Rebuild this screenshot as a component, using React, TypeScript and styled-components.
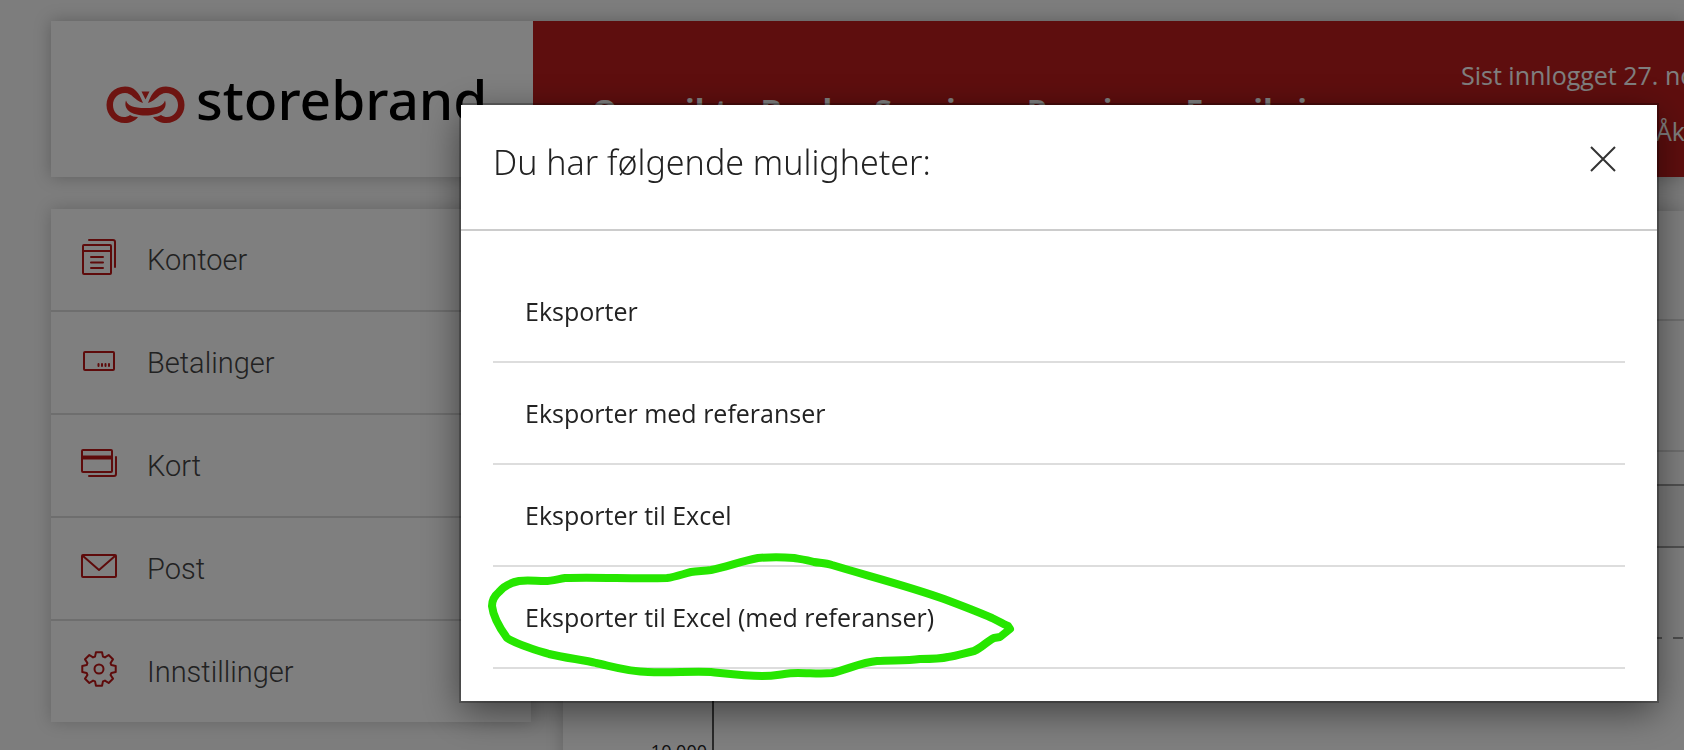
import React from "react";
import styled, { createGlobalStyle } from "styled-components";

const Global = createGlobalStyle`
  * { box-sizing: border-box; }
  html, body, #root { height: 100%; }
  body { margin: 0; background: #fafafa; color: #333; font-family: "Open Sans", "Noto Sans", sans-serif; overflow: hidden; }
  ul { list-style: none; margin: 0; padding: 0; }
  a { color: inherit; text-decoration: none; }
`;

const Page = styled.div`
  height: 100%;
  padding: 21px 0 0 51px;
  overflow: hidden;
`;

const Header = styled.header`
  display: flex;
  height: 156px;
  margin-bottom: 32px;
  box-shadow: 0 0 16px rgba(0, 0, 0, 0.25);
`;

const Brand = styled.a`
  flex: none;
  display: flex;
  align-items: center;
  width: 482px;
  padding: 12px 0 0 55px;
  background: #fff;
`;

const Banner = styled.div`
  flex: 1;
  min-width: 0;
  display: flex;
  justify-content: space-between;
  padding-left: 59px;
  background: #bd1c1c;
  color: #fff;
`;

const Nav = styled.nav`
  display: flex;
  gap: 32px;
  padding-top: 70px;
  font-size: 32px;
  line-height: 40px;
  font-weight: 700;
  white-space: nowrap;
`;

const Account = styled.div`
  flex: none;
  display: flex;
  flex-direction: column;
  gap: 20px;
  width: 223px;
  padding-top: 36px;
  overflow: hidden;
  font-size: 25px;
  line-height: 36px;
  white-space: nowrap;
`;

const UserName = styled.span`
  padding-left: 195px;
`;

const Columns = styled.div`
  display: flex;
  align-items: flex-start;
  gap: 32px;
`;

const Sidebar = styled.nav`
  flex: none;
  width: 480px;
  background: #fff;
  box-shadow: 0 0 16px rgba(0, 0, 0, 0.2);
`;

const SideItem = styled.li`
  & + & { border-top: 2px solid #dcdcdc; }
`;

const SideLink = styled.a`
  display: flex;
  align-items: center;
  gap: 28px;
  height: 101px;
  padding-left: 28px;
  font-family: Roboto, sans-serif;
  font-weight: 300;
  font-size: 29px;
  line-height: 40px;
  color: #444;

  svg { flex: none; margin-bottom: 5px; }
`;

const Content = styled.main`
  flex: 1;
  min-width: 0;
  height: 600px;
  margin-top: 2px;
  background: #fff;
  box-shadow: 0 0 16px rgba(0, 0, 0, 0.2);
`;

const Band = styled.div<{ $height: number; $line: string; $fill?: string }>`
  height: ${(p) => p.$height}px;
  border-bottom: 2px solid ${(p) => p.$line};
  background: ${(p) => p.$fill ?? "transparent"};
`;

const Chart = styled.div`
  display: flex;
  height: 220px;
`;

const AxisLabels = styled.div`
  width: 151px;
  padding: 189px 5px 0 0;
  border-right: 2px solid #555;
  text-align: right;
  font-size: 18px;
  line-height: 28px;
  color: #222;
`;

const Plot = styled.div`
  flex: 1;
  padding-top: 89px;
`;

const GridLine = styled.div`
  height: 2px;
  background: repeating-linear-gradient(to left, transparent 0 1px, #999 1px 11px, transparent 11px 21px);
`;

const Overlay = styled.div`
  position: fixed;
  inset: 0;
  padding: 105px 27px 0 461px;
  background: rgba(0, 0, 0, 0.5);
`;

const Dialog = styled.section`
  background: #fff;
  box-shadow: 0 0 0 2px rgba(0, 0, 0, 0.25), 0 10px 36px rgba(0, 0, 0, 0.5);
`;

const DialogHeader = styled.div`
  display: flex;
  justify-content: space-between;
  align-items: flex-start;
  height: 126px;
  padding: 32px 38px 0 32px;
  border-bottom: 2px solid #ccc;
`;

const Title = styled.h2`
  margin: 0;
  font-family: "Noto Sans", "Open Sans", sans-serif;
  font-weight: 300;
  font-size: 34px;
  line-height: 50px;
  color: #222;
`;

const CloseButton = styled.button`
  display: flex;
  padding: 6px 0;
  border: 0;
  background: none;
  cursor: pointer;
`;

const Options = styled.ul`
  && { padding: 30px 32px 32px; }
`;

const Option = styled.li`
  position: relative;
  border-bottom: 2px solid #ddd;
`;

const OptionLink = styled.a`
  display: block;
  padding: 32px;
  font-size: 25px;
  line-height: 36px;
  color: #222;
`;

const Marker = styled.svg`
  position: absolute;
  left: -8px;
  top: -20px;
  pointer-events: none;
`;

const icon = { fill: "none", stroke: "#bd1616", strokeWidth: 2, strokeLinejoin: "round", strokeLinecap: "round" } as const;

const AccountsIcon = () => (
  <svg width="40" height="40" viewBox="0 0 40 40" {...icon}>
    <rect x="4" y="8" width="28" height="29" rx="1" />
    <path d="M4 14H32M12 20H24M12 25.500H24M12 31H24M10 3H34Q36 3 36 5V30" />
  </svg>
);

const PaymentsIcon = () => (
  <svg width="40" height="40" viewBox="0 0 40 40" {...icon}>
    <rect x="5" y="12" width="30" height="18" rx="1" />
    <path d="M19.500 24V26M23 24V26M26.500 24V26M30 24V26" />
  </svg>
);

const CardsIcon = () => (
  <svg width="40" height="40" viewBox="0 0 40 40" {...icon}>
    <rect x="3" y="7" width="30" height="22" rx="1" />
    <path d="M4 14.500H32" strokeWidth="4" strokeLinecap="butt" />
    <path d="M10 33H35Q37 33 37 31V14" />
  </svg>
);

const MailIcon = () => (
  <svg width="40" height="40" viewBox="0 0 40 40" {...icon}>
    <rect x="3" y="9" width="34" height="22" rx="1" />
    <path d="M4 10L20 24L36 10" />
  </svg>
);

const SettingsIcon = () => {
  const points: string[] = [];
  for (let i = 0; i < 8; i++) {
    const base = (i * Math.PI) / 4;
    ([[-0.31, 13], [-0.18, 17], [0.18, 17], [0.31, 13]] as const).forEach(([a, r]) => {
      points.push(`${(20 + r * Math.sin(base + a)).toFixed(2)},${(20 - r * Math.cos(base + a)).toFixed(2)}`);
    });
  }
  return (
    <svg width="40" height="40" viewBox="0 0 40 40" {...icon}>
      <polygon points={points.join(" ")} />
      <circle cx="20" cy="20" r="4.500" />
    </svg>
  );
};

const Wordmark = styled.span`
  margin-left: 10px;
  margin-bottom: 12px;
  font-family: "Noto Sans", sans-serif;
  font-weight: 500;
  font-size: 55px;
  line-height: 60px;
  color: #000;
`;

const LogoMark = () => (
  <svg width="80" height="38" viewBox="0 0 80 38" fill="#dc2822">
    <path d="M37 17C33 6 28 0.500 19 0.500C8 0.500 0.500 9 0.500 19C0.500 29 8 37 19 37C24 37 29 35 32 31C28 31 26 30 24 29C22 30.500 20 31 18 31C11 31 7 25 7 19C7 12 12 7 19 7C26 7 28 14 37 17Z" />
    <path d="M42 17C46 6 51 0.500 60 0.500C71 0.500 78.500 9 78.500 19C78.500 29 71 37 60 37C55 37 50 35 47 31C51 31 53 30 55 29C57 30.500 59 31 61 31C68 31 72 25 72 19C72 12 67 7 60 7C53 7 51 14 42 17Z" />
    <path d="M20 14.500C22 20 27 22 39.500 22C52 22 57 20 59 14.500C62 23 54 29.500 39.500 29.500C25 29.500 17 23 20 14.500Z" />
    <path d="M35.500 5.500H43.500L39.500 13.500Z" />
  </svg>
);

const sideItems = [
  { label: "Kontoer", Icon: AccountsIcon },
  { label: "Betalinger", Icon: PaymentsIcon },
  { label: "Kort", Icon: CardsIcon },
  { label: "Post", Icon: MailIcon },
  { label: "Innstillinger", Icon: SettingsIcon },
];

const navItems = ["Oversikt", "Bank", "Sparing", "Pensjon", "Forsikring"];
const options = ["Eksporter", "Eksporter med referanser", "Eksporter til Excel", "Eksporter til Excel (med referanser)"];

const App = () => (
  <>
    <Global />
    <Page>
      <Header>
        <Brand href="#">
          <LogoMark />
          <Wordmark>storebrand</Wordmark>
        </Brand>
        <Banner>
          <Nav>{navItems.map((n) => <a href="#" key={n}>{n}</a>)}</Nav>
          <Account>
            <span>Sist innlogget 27. nov</span>
            <UserName>Åk</UserName>
          </Account>
        </Banner>
      </Header>
      <Columns>
        <Sidebar>
          <ul>
            {sideItems.map(({ label, Icon }) => (
              <SideItem key={label}>
                <SideLink href="#"><Icon />{label}</SideLink>
              </SideItem>
            ))}
          </ul>
        </Sidebar>
        <Content>
          <Band $height={110} $line="#dcdcdc" />
          <Band $height={131} $line="#dcdcdc" />
          <Band $height={34} $line="#a0a0a0" />
          <Band $height={62} $line="#a0a0a0" $fill="#f4f4f4" />
          <Chart>
            <AxisLabels>10 000</AxisLabels>
            <Plot><GridLine /></Plot>
          </Chart>
        </Content>
      </Columns>
    </Page>
    <Overlay>
      <Dialog role="dialog" aria-labelledby="dialog-title">
        <DialogHeader>
          <Title id="dialog-title">Du har følgende muligheter:</Title>
          <CloseButton aria-label="Lukk">
            <svg width="32" height="32" viewBox="0 0 32 32" stroke="#333" strokeWidth="2">
              <path d="M4 4L28 28M28 4L4 28" />
            </svg>
          </CloseButton>
        </DialogHeader>
        <Options>
          {options.map((o, i) => (
            <Option key={o}>
              <OptionLink href="#">{o}</OptionLink>
              {i === options.length - 1 && (
                <Marker width="540" height="140" viewBox="485 547 540 140" fill="none" stroke="#26e600" strokeWidth="8" strokeLinejoin="round">
                  <path d="M492 606C493 615 499 627 507 638C518 645 536 650 549 654C565 658 585 660 596 663C614 667 630 672 648 672C670 673 692 671 711 672C730 674 745 676 762 676C778 676 784 673 798 673C810 673 822 674 832 673C846 670 862 662 877 661C892 660 906 661 920 659C930 659 940 659 948 657C957 656 965 653 974 651C983 647 987 641 994 638L1000 637L1010 629L1008 626C1003 624 998 621 992 618C976 611 960 605 944 599C908 586 868 576 832 565C826 563 820 563 814 562C808 560 800 559 794 558C782 557 770 557 758 558C742 561 726 567 711 570C704 571 698 571 691 572C683 574 675 577 667 578C633 579 599 577 565 578C558 579 552 581 545 581C536 581 527 580 519 581C509 583 503 587 499 592C493 597 492 601 492 606Z" />
                </Marker>
              )}
            </Option>
          ))}
        </Options>
      </Dialog>
    </Overlay>
  </>
);

export default App;
